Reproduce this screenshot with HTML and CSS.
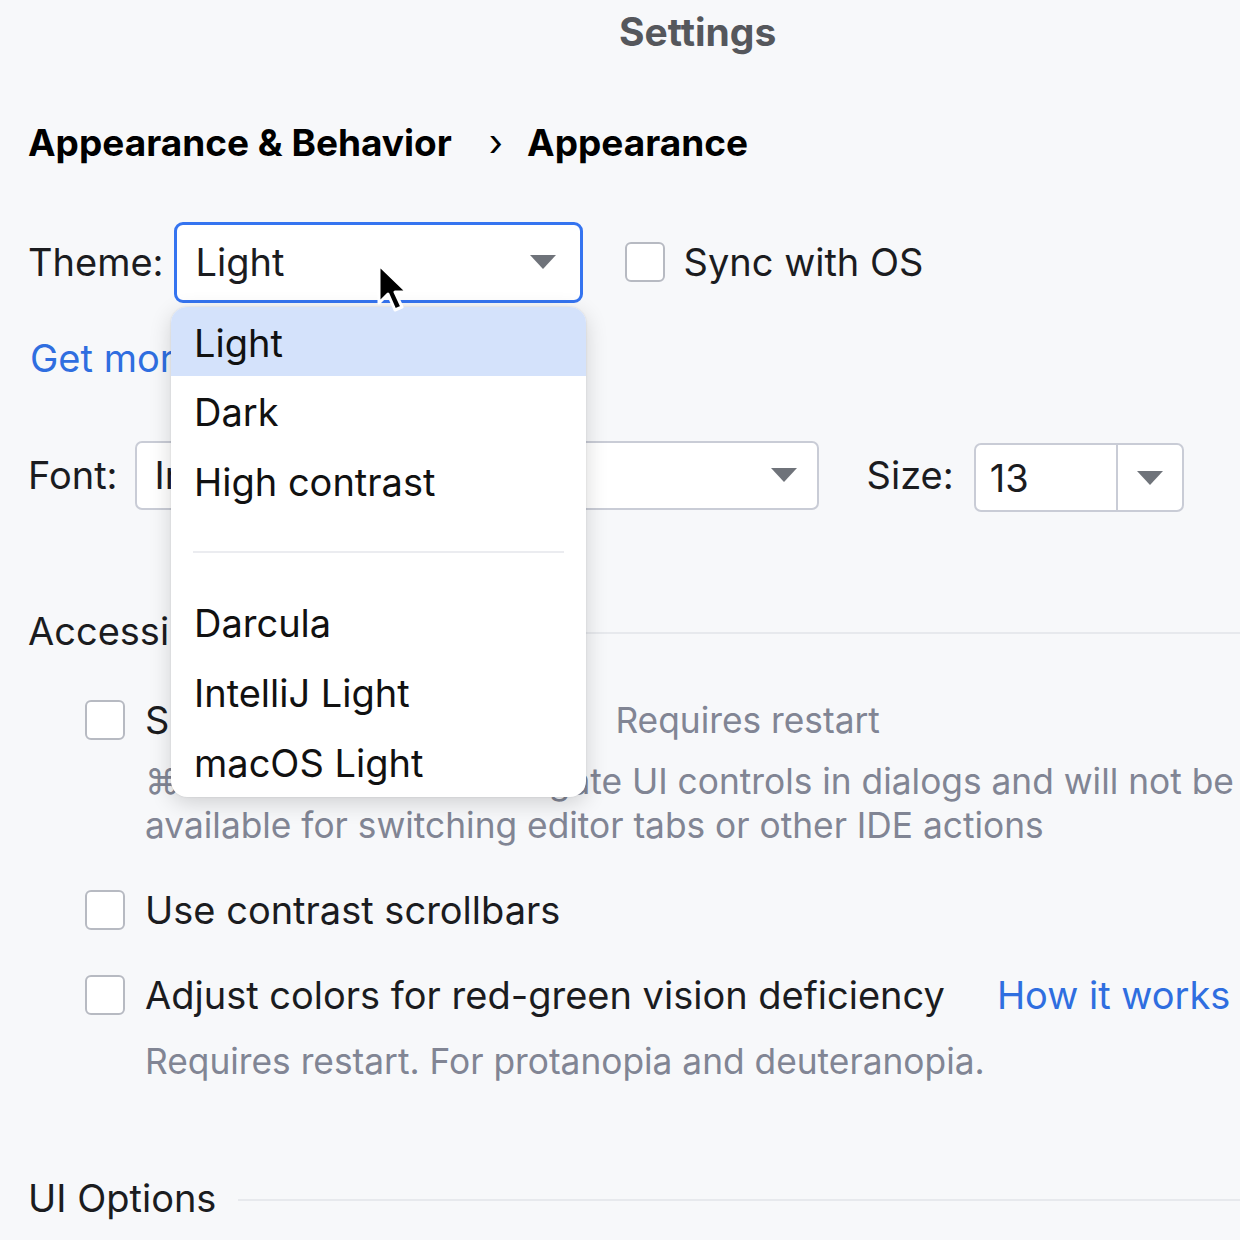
FILE: index.html
```html
<!DOCTYPE html>
<html>
<head>
<meta charset="utf-8">
<link rel="stylesheet" href="styles.css">
</head>
<body>
<div class="page">
  <div class="title">Settings</div>
  <div class="crumbs"><span>Appearance &amp; Behavior</span><span class="sep">›</span><span>Appearance</span></div>

  <div class="row theme-row">
    <span class="label">Theme:</span>
    <div class="combo theme-combo"><span class="value">Light</span>
      <svg class="arrow" width="26" height="14" viewBox="0 0 26 14"><path d="M0 0 H26 L13 14 Z" fill="#6f737a"/></svg>
    </div>
    <div class="check sync"><span class="box"></span><span>Sync with OS</span></div>
  </div>

  <div class="link-row"><span class="link">Get more themes</span></div>

  <div class="row font-row">
    <span class="label">Font:</span>
    <div class="combo font-combo"><span class="value">Inter</span>
      <svg class="arrow" width="26" height="14" viewBox="0 0 26 14"><path d="M0 0 H26 L13 14 Z" fill="#6f737a"/></svg>
    </div>
    <span class="label size-label">Size:</span>
    <div class="size-box"><span class="size-value">13</span><span class="size-btn">
      <svg width="26" height="14" viewBox="0 0 26 14"><path d="M0 0 H26 L13 14 Z" fill="#6f737a"/></svg></span></div>
  </div>

  <div class="section access"><span>Accessibility</span><div class="rule"></div></div>

  <div class="option first"><span class="box"></span><span>Support screen readers</span><span class="hint">Requires restart</span></div>
  <div class="desc">⌘⇥ and ⌘⇧⇥ will navigate UI controls in dialogs and will not be<br>available for switching editor tabs or other IDE actions</div>

  <div class="option contrast"><span class="box"></span><span>Use contrast scrollbars</span></div>

  <div class="option adjust"><span class="box"></span><span>Adjust colors for red-green vision deficiency</span><span class="link how">How it works</span></div>
  <div class="desc single">Requires restart. For protanopia and deuteranopia.</div>

  <div class="section ui"><span>UI Options</span><div class="rule"></div></div>

  <div class="popup">
    <div class="item selected">Light</div>
    <div class="item">Dark</div>
    <div class="item">High contrast</div>
    <div class="divider"></div>
    <div class="item">Darcula</div>
    <div class="item">IntelliJ Light</div>
    <div class="item">macOS Light</div>
  </div>

  <svg class="cursor" width="34" height="52" viewBox="0 0 34 52">
    <path d="M3 2 L3 40 L12 31 L19 47 L26 44 L19 29 L31 29 Z" fill="#000" stroke="#fff" stroke-width="3" stroke-linejoin="round"/>
  </svg>
</div>
</body>
</html>
```

FILE: styles.css
```css
* { box-sizing: border-box; }
html, body { margin: 0; padding: 0; }
body {
  background: #f7f8fa;
  font-family: Inter, "Noto Sans", sans-serif;
  color: #1b1c1f;
  font-size: 38px;
  width: 1240px;
  height: 1240px;
  overflow: hidden;
}
.page {
  position: relative;
  padding-left: 28px;
  width: 1240px;
  height: 1240px;
}
.title {
  padding-left: 591px;
  font-weight: 700;
  color: #55575c;
  font-size: 39px;
  height: 64px;
  line-height: 64px;
}
.crumbs {
  margin-top: 50px;
  height: 58px;
  line-height: 58px;
  font-weight: 700;
  font-size: 37px;
  display: flex;
  color: #000;
}
.crumbs .sep {
  font-weight: 400;
  margin: 0 24px 0 37px;
}
.row {
  display: flex;
  align-items: center;
}
.theme-row {
  margin-top: 49px;
  height: 82px;
}
.label { white-space: nowrap; }
.combo {
  background: #fff;
  border: 2px solid #c9ccd6;
  border-radius: 7px;
  display: flex;
  align-items: center;
  justify-content: space-between;
}
.theme-combo {
  margin-left: 10px;
  width: 409px;
  height: 81px;
  border: 3.5px solid #3574f0;
  border-radius: 9px;
  padding: 0 24px 0 19px;
}
.check {
  display: flex;
  align-items: center;
  margin-left: 42px;
}
.box {
  display: inline-block;
  width: 40px;
  height: 40px;
  border: 2px solid #b7bac2;
  border-radius: 6px;
  background: #fff;
  flex: none;
}
.check .box { margin-right: 19px; }
.link { color: #2f6ee0; white-space: nowrap; }
.link-row {
  height: 50px;
  line-height: 50px;
  margin-top: 30px;
  padding-left: 2px;
}
.font-row {
  margin-top: 57px;
  height: 70px;
}
.font-combo {
  margin-left: 17px;
  width: 684px;
  height: 69px;
  padding: 0 20px 0 18px;
}
.size-label { margin-left: 48px; }
.size-box {
  margin-left: 20px;
  width: 210px;
  height: 69px;
  background: #fff;
  border: 2px solid #c9ccd6;
  border-radius: 7px;
  display: flex;
  align-items: stretch;
  margin-top: 5px;
}
.size-value {
  flex: 1;
  display: flex;
  align-items: center;
  padding-left: 14px;
  border-right: 2px solid #c9ccd6;
}
.size-btn {
  width: 64px;
  display: flex;
  align-items: center;
  justify-content: center;
}
.section {
  display: flex;
  align-items: center;
}
.section .rule {
  flex: 1;
  height: 2px;
  background: #e7e9ed;
  margin-left: 22px;
  margin-top: 4px;
}
.access {
  margin-top: 96px;
  height: 50px;
}
.option {
  display: flex;
  align-items: center;
  padding-left: 57px;
  height: 50px;
  white-space: nowrap;
}
.option .box { margin-right: 20px; }
.option.first { margin-top: 39px; }
.hint { color: #818594; margin-left: 30px; font-size: 35.3px; }
.first .hint { margin-left: 46px; }
.desc {
  color: #818594;
  font-size: 35.3px;
  padding-left: 117px;
  line-height: 44px;
  margin-top: 15px;
  white-space: nowrap;
}
.option.contrast { margin-top: 37px; }
.option.adjust { margin-top: 35px; }
.how { margin-left: 52px; }
.desc.single { margin-top: 20px; }
.ui { margin-top: 89px; height: 50px; }

.popup {
  position: absolute;
  left: 171px;
  top: 307px;
  width: 415px;
  height: 490px;
  background: #fff;
  border-radius: 16px;
  box-shadow: 0 6px 22px rgba(0,0,0,0.16), 0 0 2px rgba(0,0,0,0.12);
  overflow: hidden;
}
.item {
  height: 70px;
  line-height: 72px;
  padding-left: 23px;
  white-space: nowrap;
  color: #111;
}
.item.selected { background: #d4e2fb; height: 69px; line-height: 72px; }
.divider {
  height: 2px;
  background: #ebecf0;
  margin: 35px 22px 34px;
}
.cursor {
  position: absolute;
  left: 376px;
  top: 263px;
}
```
